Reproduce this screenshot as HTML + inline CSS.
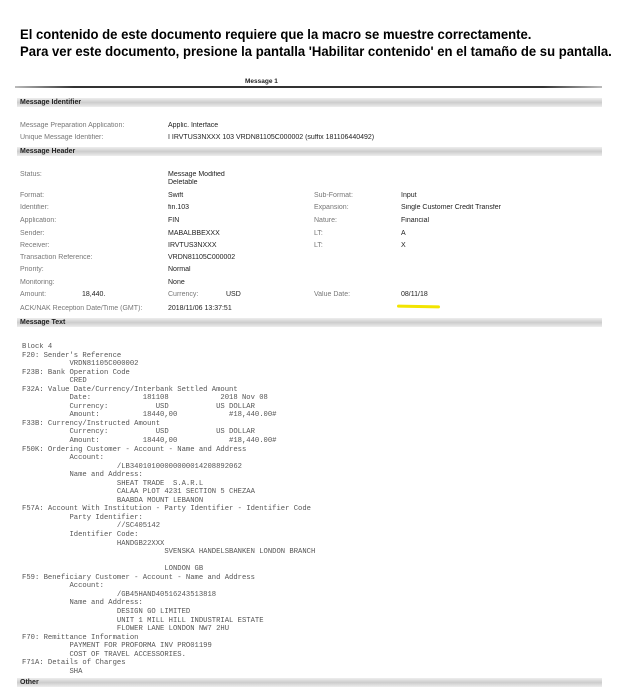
<!DOCTYPE html>
<html><head><meta charset="utf-8"><style>
body{margin:0;width:628px;height:682px;background:#fff;position:relative;overflow:hidden;font-family:"Liberation Sans",sans-serif}
.h{position:absolute;left:20px;font-weight:bold;font-size:14px;color:#000;white-space:nowrap;transform-origin:left top;transform:scaleX(.935)}
.a{position:absolute;white-space:nowrap;font-size:7px;color:#222;filter:blur(.3px)}
.l{color:#777}
.bar{position:absolute;left:17px;width:585px;height:9px;background:linear-gradient(#eee,#ccc,#eee);}
.bar span{position:absolute;left:3px;top:0;font-size:7px;font-weight:bold;color:#222;line-height:9px}
pre{position:absolute;left:22px;top:343px;margin:0;font-family:"Liberation Mono",monospace;font-size:7.2px;line-height:8.55px;color:#555;filter:blur(.35px)}
</style></head><body>
<div class="h" style="top:26px">El contenido de este documento requiere que la macro se muestre correctamente.</div>
<div class="h" style="top:43px">Para ver este documento, presione la pantalla 'Habilitar contenido' en el tamaño de su pantalla.</div>
<div class="a" style="left:245px;top:78px;font-weight:bold;font-size:6.5px">Message 1</div>
<div style="position:absolute;left:15px;top:86px;width:587px;height:2px;background:linear-gradient(90deg,#bbb,#333 10%,#333 90%,#bbb)"></div>
<div class="bar" style="top:98px"><span>Message Identifier</span></div>
<div class="a l" style="left:20px;top:122px">Message Preparation Application:</div><div class="a" style="left:168px;top:122px">Applic. Interface</div>
<div class="a l" style="left:20px;top:134px">Unique Message Identifier:</div><div class="a" style="left:168px;top:134px">I IRVTUS3NXXX 103 VRDN81105C000002 (suffix 181106440492)</div>
<div class="bar" style="top:147px"><span>Message Header</span></div>
<div class="a l" style="left:20px;top:171px">Status:</div><div class="a" style="left:168px;top:171px">Message Modified</div><div class="a" style="left:168px;top:179px">Deletable</div>
<div class="a l" style="left:20px;top:192px">Format:</div><div class="a" style="left:168px;top:192px">Swift</div><div class="a l" style="left:314px;top:192px">Sub-Format:</div><div class="a" style="left:401px;top:192px">Input</div>
<div class="a l" style="left:20px;top:204px">Identifier:</div><div class="a" style="left:168px;top:204px">fin.103</div><div class="a l" style="left:314px;top:204px">Expansion:</div><div class="a" style="left:401px;top:204px">Single Customer Credit Transfer</div>
<div class="a l" style="left:20px;top:217px">Application:</div><div class="a" style="left:168px;top:217px">FIN</div><div class="a l" style="left:314px;top:217px">Nature:</div><div class="a" style="left:401px;top:217px">Financial</div>
<div class="a l" style="left:20px;top:230px">Sender:</div><div class="a" style="left:168px;top:230px">MABALBBEXXX</div><div class="a l" style="left:314px;top:230px">LT:</div><div class="a" style="left:401px;top:230px">A</div>
<div class="a l" style="left:20px;top:242px">Receiver:</div><div class="a" style="left:168px;top:242px">IRVTUS3NXXX</div><div class="a l" style="left:314px;top:242px">LT:</div><div class="a" style="left:401px;top:242px">X</div>
<div class="a l" style="left:20px;top:254px">Transaction Reference:</div><div class="a" style="left:168px;top:254px">VRDN81105C000002</div>
<div class="a l" style="left:20px;top:266px">Priority:</div><div class="a" style="left:168px;top:266px">Normal</div>
<div class="a l" style="left:20px;top:279px">Monitoring:</div><div class="a" style="left:168px;top:279px">None</div>
<div class="a l" style="left:20px;top:291px">Amount:</div><div class="a" style="left:82px;top:291px">18,440.</div><div class="a l" style="left:168px;top:291px">Currency:</div><div class="a" style="left:226px;top:291px">USD</div><div class="a l" style="left:314px;top:291px">Value Date:</div><div class="a" style="left:401px;top:291px">08/11/18</div>
<div style="position:absolute;left:397px;top:305px;width:43px;height:3px;background:#f2e400;border-radius:2px;transform:rotate(1deg)"></div>
<div class="a l" style="left:20px;top:305px">ACK/NAK Reception Date/Time (GMT):</div><div class="a" style="left:168px;top:305px">2018/11/06 13:37:51</div>
<div class="bar" style="top:318px"><span>Message Text</span></div>
<pre>Block 4
F20: Sender's Reference
           VRDN81105C000002
F23B: Bank Operation Code
           CRED
F32A: Value Date/Currency/Interbank Settled Amount
           Date:            181108            2018 Nov 08
           Currency:           USD           US DOLLAR
           Amount:          18440,00            #18,440.00#
F33B: Currency/Instructed Amount
           Currency:           USD           US DOLLAR
           Amount:          18440,00            #18,440.00#
F50K: Ordering Customer - Account - Name and Address
           Account:
                      /LB34010100000000014208892062
           Name and Address:
                      SHEAT TRADE  S.A.R.L
                      CALAA PLOT 4231 SECTION 5 CHEZAA
                      BAABDA MOUNT LEBANON
F57A: Account With Institution - Party Identifier - Identifier Code
           Party Identifier:
                      //SC405142
           Identifier Code:
                      HANDGB22XXX
                                 SVENSKA HANDELSBANKEN LONDON BRANCH

                                 LONDON GB
F59: Beneficiary Customer - Account - Name and Address
           Account:
                      /GB45HAND40516243513818
           Name and Address:
                      DESIGN GO LIMITED
                      UNIT 1 MILL HILL INDUSTRIAL ESTATE
                      FLOWER LANE LONDON NW7 2HU
F70: Remittance Information
           PAYMENT FOR PROFORMA INV PRO01199
           COST OF TRAVEL ACCESSORIES.
F71A: Details of Charges
           SHA</pre>
<div class="bar" style="top:678px"><span>Other</span></div>
</body></html>
